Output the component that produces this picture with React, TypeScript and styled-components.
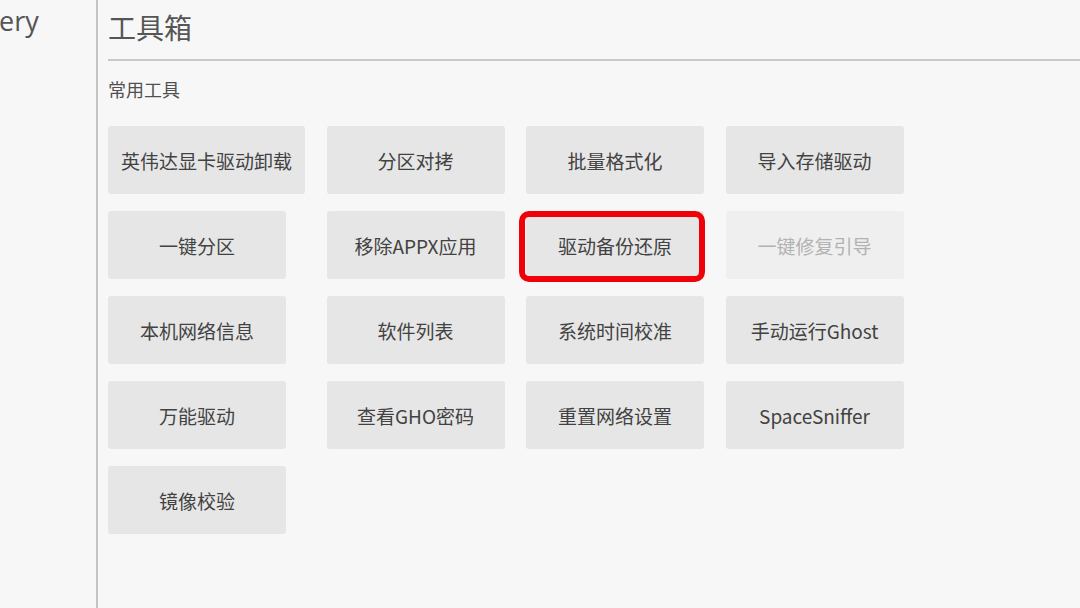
import React from 'react';
import styled, { createGlobalStyle } from 'styled-components';

const GlobalStyle = createGlobalStyle`
  html, body {
    margin: 0;
    padding: 0;
    background: #f7f7f7;
  }
  body {
    font-family: "Noto Sans CJK SC", "Noto Sans", sans-serif;
  }
`;

type Tool = {
  label: string;
  disabled?: boolean;
  marked?: boolean;
};

const tools: Tool[] = [
  { label: '英伟达显卡驱动卸载' },
  { label: '分区对拷' },
  { label: '批量格式化' },
  { label: '导入存储驱动' },
  { label: '一键分区' },
  { label: '移除APPX应用' },
  { label: '驱动备份还原', marked: true },
  { label: '一键修复引导', disabled: true },
  { label: '本机网络信息' },
  { label: '软件列表' },
  { label: '系统时间校准' },
  { label: '手动运行Ghost' },
  { label: '万能驱动' },
  { label: '查看GHO密码' },
  { label: '重置网络设置' },
  { label: 'SpaceSniffer' },
  { label: '镜像校验' },
];

const Window = styled.div`
  display: flex;
  width: 1080px;
  height: 608px;
  overflow: hidden;
  background: #f7f7f7;
`;

const Sidebar = styled.aside`
  width: 96px;
  flex-shrink: 0;
  border-right: 2px solid #c4c4c4;
`;

const SideTitle = styled.div`
  margin: 3px 0 0 -1px;
  font-family: "Open Sans", "Noto Sans", sans-serif;
  font-size: 27px;
  line-height: 36px;
  color: #555;
`;

const Main = styled.main`
  flex: 1;
  padding-left: 10px;
  display: flex;
  flex-direction: column;
`;

const Header = styled.h1`
  margin: 0;
  padding: 13px 0 18px;
  font-size: 28px;
  line-height: 28px;
  font-weight: 400;
  color: #555;
  border-bottom: 2px solid #c8c8c8;
`;

const SectionTitle = styled.h2`
  margin: 19px 0 0;
  font-size: 18px;
  line-height: 18px;
  font-weight: 400;
  color: #505050;
`;

const ToolGrid = styled.div`
  margin-top: 28px;
  display: grid;
  grid-template-columns: repeat(4, max-content);
  column-gap: 21.5px;
  row-gap: 17px;
  justify-items: start;
`;

const ToolButton = styled.button<{ $disabled?: boolean }>`
  position: relative;
  min-width: 178px;
  height: 68px;
  padding: 0 13px;
  border: none;
  border-radius: 3px;
  background: ${(p) => (p.$disabled ? '#efefef' : '#e6e6e6')};
  color: ${(p) => (p.$disabled ? '#b2b2b2' : '#424242')};
  font-family: "Noto Sans CJK SC", "Noto Sans", sans-serif;
  font-size: 19px;
  white-space: nowrap;
  cursor: ${(p) => (p.$disabled ? 'default' : 'pointer')};
`;

const Highlight = styled.span`
  position: absolute;
  left: -7px;
  top: 0;
  right: -1px;
  bottom: -3px;
  border: 6px solid #f00008;
  border-radius: 10px;
  pointer-events: none;
`;

export default function App() {
  return (
    <>
      <GlobalStyle />
      <Window>
        <Sidebar>
          <SideTitle>ery</SideTitle>
        </Sidebar>
        <Main>
          <Header>工具箱</Header>
          <SectionTitle>常用工具</SectionTitle>
          <ToolGrid>
            {tools.map((t) => (
              <ToolButton key={t.label} $disabled={t.disabled}>
                {t.label}
                {t.marked && <Highlight />}
              </ToolButton>
            ))}
          </ToolGrid>
        </Main>
      </Window>
    </>
  );
}
